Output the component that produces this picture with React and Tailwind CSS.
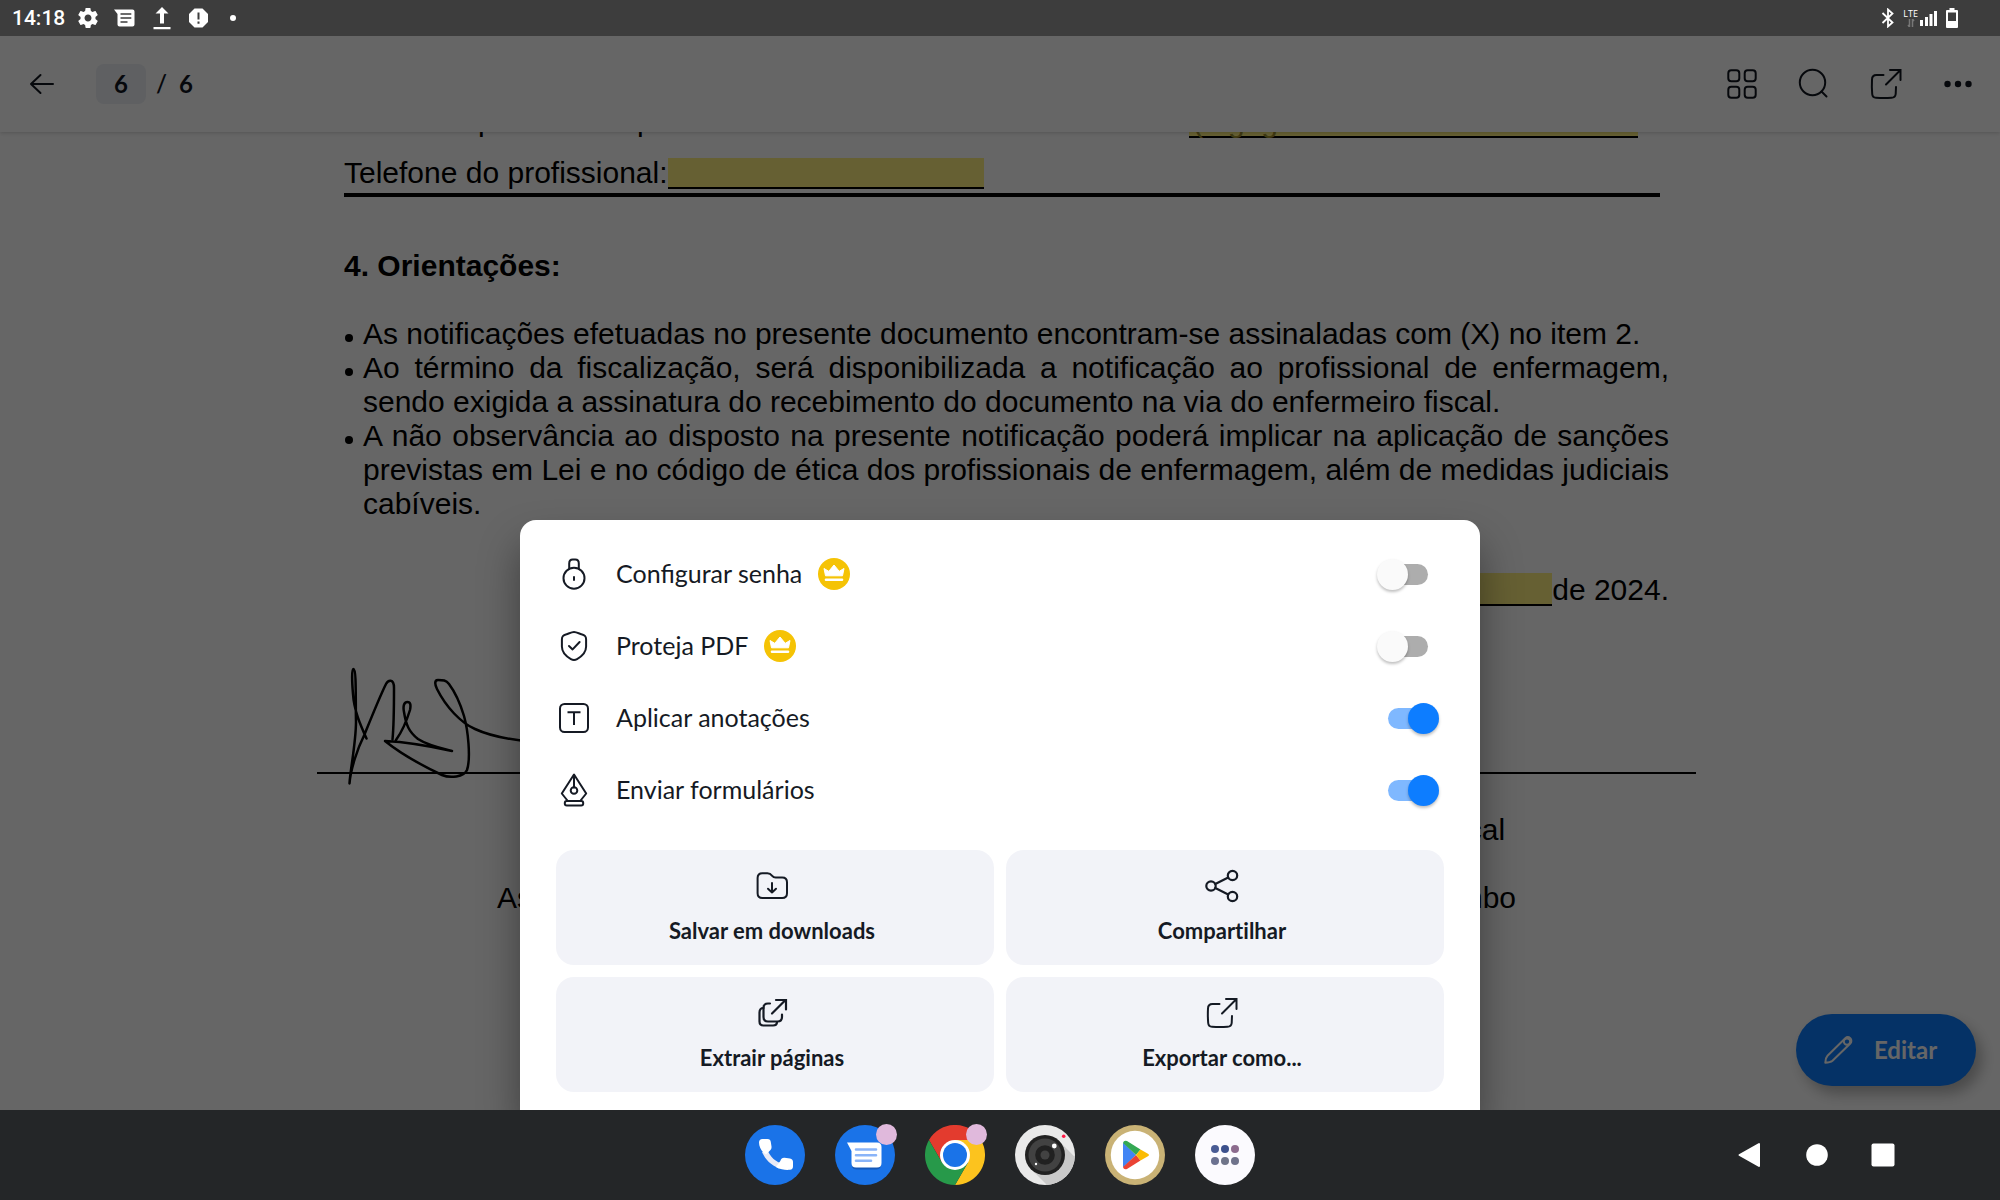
const SANS = "font-['Lato','Open_Sans',sans-serif]";

/* ---------- line icons ---------- */

function Line({ box = 36, className = "size-9", width = 2, children }) {
  return (
    <svg
      viewBox={`0 0 ${box} ${box}`}
      className={className}
      fill="none"
      stroke="currentColor"
      strokeWidth={width}
      strokeLinecap="round"
      strokeLinejoin="round"
      aria-hidden="true"
    >
      {children}
    </svg>
  );
}

const BackIcon = () => (
  <Line>
    <path d="M29 18H7M16.500 9 7 18l9.500 9" />
  </Line>
);

const GridIcon = () => (
  <Line>
    <rect x="4.300" y="4.300" width="11" height="11" rx="3" />
    <rect x="20.700" y="4.300" width="11" height="11" rx="3" />
    <rect x="4.300" y="20.700" width="11" height="11" rx="3" />
    <rect x="20.700" y="20.700" width="11" height="11" rx="3" />
  </Line>
);

const SearchIcon = () => (
  <Line>
    <circle cx="16.500" cy="16.500" r="12.700" />
    <path d="m25.500 25.500 5 5" />
  </Line>
);

const ExportIcon = () => (
  <Line>
    <path d="M15.500 9H8.500Q4 9 4 13.500 3.600 21 4.200 28 4.500 31.600 8 31.800 16 32.400 23.500 31.800 27.300 31.600 27.700 28L28 21" />
    <path d="m18 18.500 14-14M22 4h10.500v10" strokeLinejoin="miter" />
  </Line>
);

const MoreIcon = () => (
  <Line>
    <g fill="currentColor" stroke="none">
      <circle cx="7.500" cy="18" r="3.200" />
      <circle cx="18" cy="18" r="3.200" />
      <circle cx="28.500" cy="18" r="3.200" />
    </g>
  </Line>
);

const PencilIcon = () => (
  <Line>
    <path d="M5.300 30.700c0-3.500.3-5 2.200-7L25.300 6.300a3.700 3.700 0 0 1 5 0 3.700 3.700 0 0 1 0 5.200L12.500 28.800c-2 1.700-3.700 1.900-7.200 1.900Z" />
    <circle cx="27" cy="9.600" r="3.200" />
  </Line>
);

const LockIcon = () => (
  <Line>
    <circle cx="18" cy="22.200" r="10.500" />
    <path d="M13.200 12.500V7.500q0-4 3.500-4h2.600q3.500 0 3.500 4v5M18 21v3" />
  </Line>
);

const ShieldIcon = () => (
  <Line>
    <path d="M18 4c-2 0-4 1-7.500 2.300-3.500 1.200-4.600 2-4.600 5.300v7c0 6.500 4.500 10 9 12.500 2.400 1.300 3.800 1.300 6.200 0 4.500-2.500 9-6 9-12.500v-7c0-3.300-1.100-4.100-4.600-5.300C22 5 20 4 18 4Z" />
    <path d="m13 18 3.600 3.400 7-7.400" />
  </Line>
);

const TextBoxIcon = () => (
  <Line>
    <rect x="4" y="4" width="28" height="28" rx="4.500" />
    <path d="M11.500 12.200h13M18 12.200V25" strokeLinecap="butt" />
  </Line>
);

const NibIcon = () => (
  <Line>
    <path d="M18 2.500 5.800 21.500l6 7.500h12.400l6-7.500L18 2.500ZM18 3v12.500" />
    <circle cx="18" cy="18.500" r="3.300" />
    <rect x="8.800" y="29" width="18.400" height="4.600" rx="2" />
  </Line>
);

const FolderDownIcon = () => (
  <Line>
    <path d="M3.600 10q0-4.800 4.800-4.800h5c2.400 0 3.600 1 4.800 2.600 1 1.300 1.600 1.700 3.400 1.700h6.600q4.800 0 4.800 4.800v11q0 4.800-4.800 4.800H8.400q-4.800 0-4.800-4.800V10Z" />
    <path d="M18 15v9.500M14 20.800l4 3.700 4-3.700" />
  </Line>
);

const ShareIcon = () => (
  <Line width={2.200}>
    <circle cx="7" cy="18" r="4.700" />
    <circle cx="28.500" cy="7.500" r="4.700" />
    <circle cx="28.500" cy="28.500" r="4.700" />
    <path d="m11.300 16 12.900-6.500M11.300 20l12.900 6.500" />
  </Line>
);

const ExtractIcon = () => (
  <Line width={2.200}>
    <path d="M16 8.500h-2q-4.500 0-4.500 4.500v9q0 4.500 4.500 4.500h9.500q4.500 0 4.500-4.500v-2.500" />
    <path d="M9.500 13q-4 0-4 4.500v9q0 4 4 4h9.500q4 0 4-3.500" />
    <path d="m18 18.500 13-13M22 5h10v9.500" strokeLinejoin="miter" />
  </Line>
);

const CrownBadge = () => (
  <svg viewBox="0 0 32 32" className="size-8" aria-label="Premium">
    <circle cx="16" cy="16" r="16" fill="#f5c305" />
    <path
      d="M7.500 17.800 6 10.500l4.800 2.800L16 7l5.200 6.300 4.800-2.800-1.500 7.300Z"
      fill="#fff"
      stroke="#fff"
      strokeLinejoin="round"
    />
    <path d="M8 21.700h16" stroke="#fff" strokeWidth="2.600" strokeLinecap="round" />
  </svg>
);

/* ---------- status bar ---------- */

function StatusBar() {
  return (
    <header className="z-20 flex h-9 shrink-0 items-center justify-between bg-[#3d3d3d] pl-3 pr-[42px] text-white">
      <div className="flex items-center">
        <time className="w-16 font-['Roboto',sans-serif] text-[21px] leading-9 font-medium">14:18</time>
        <svg viewBox="0 0 24 24" className="size-6" fill="currentColor" aria-hidden="true">
          <path d="M19.430 12.980c.04-.32.070-.64.070-.98s-.03-.66-.07-.98l2.110-1.650c.19-.15.240-.42.120-.64l-2-3.460c-.12-.22-.39-.3-.61-.22l-2.490 1c-.52-.4-1.080-.73-1.690-.98l-.38-2.650C14.460 2.180 14.250 2 14 2h-4c-.25 0-.46.180-.49.420l-.38 2.650c-.61.250-1.170.590-1.690.98l-2.490-1c-.23-.09-.49 0-.61.220l-2 3.460c-.13.220-.07.490.12.640l2.110 1.650c-.04.320-.07.650-.07.980s.03.660.070.980l-2.110 1.650c-.19.150-.24.420-.12.640l2 3.460c.12.220.39.300.61.220l2.490-1c.52.400 1.080.730 1.690.98l.38 2.650c.03.240.24.420.49.420h4c.25 0 .46-.18.490-.42l.38-2.650c.61-.25 1.170-.59 1.690-.98l2.490 1c.23.090.49 0 .61-.22l2-3.460c.12-.22.070-.49-.12-.64l-2.110-1.650zM12 15.500c-1.930 0-3.500-1.570-3.500-3.500s1.570-3.500 3.500-3.500 3.500 1.570 3.500 3.500-1.570 3.500-3.500 3.500z" />
        </svg>
        <svg viewBox="0 0 24 24" className="ml-3 size-6" aria-hidden="true">
          <path d="M2 3.500h18.500q2 0 2 2v13q0 2-2 2h-13q-2 0-2-2V8Z" fill="currentColor" />
          <path d="M8.500 8h10.800M8.500 12h10.800M8.500 16h7" stroke="#3d3d3d" strokeWidth="1.500" />
        </svg>
        <svg viewBox="0 0 24 24" className="ml-[14px] size-6" fill="currentColor" aria-hidden="true">
          <path d="M12 1 18.500 7.500H14V17.500h-4V7.500H5.500ZM3.500 21h17v2.200h-17Z" />
        </svg>
        <svg viewBox="0 0 24 24" className="ml-3 size-6" aria-hidden="true">
          <path d="M8.500 2.500h8L22 8v8l-5.500 5.500h-8L3 16V8Z" fill="currentColor" />
          <path d="M12.500 6.500v7M12.500 15.500v2.200" stroke="#3d3d3d" strokeWidth="2" />
        </svg>
        <span className="ml-5 size-[6px] rounded-full bg-white" />
      </div>
      <div className="flex items-center">
        <svg viewBox="0 0 14 20" className="h-5 w-[14px]" fill="none" stroke="currentColor" strokeWidth="1.800" aria-hidden="true">
          <path d="m1.500 5 10 9.500L7 18.500v-17l4.500 4-10 9.500" />
        </svg>
        <div className="ml-2 flex h-5 flex-col items-center font-['Open_Sans',sans-serif] text-[9px] leading-[11px]">
          LTE
          <svg viewBox="0 0 8 8" className="h-2 w-2" stroke="#777" strokeWidth="1.500" fill="none" aria-hidden="true">
            <path d="M2.500 8V0M5.500 0v8M1 6l1.500 2M7 2 5.500 0" />
          </svg>
        </div>
        <svg viewBox="0 0 18 16" className="ml-[2px] h-4 w-[18px]" fill="currentColor" aria-hidden="true">
          <path d="M0 10h3v6H0zM5 7h3v9H5zM9.500 4h3v12h-3zM14 1h3v15h-3z" />
        </svg>
        <svg viewBox="0 0 12 20" className="ml-2 h-5 w-3" aria-hidden="true">
          <path d="M3.500 0h5v2H11q1 0 1 1v16q0 1-1 1H1q-1 0-1-1V3q0-1 1-1h2.500Z" fill="currentColor" />
          <path d="M2 4.500h8V13H2z" fill="#3d3d3d" />
        </svg>
      </div>
    </header>
  );
}

/* ---------- viewer toolbar ---------- */

const tools = [
  ["Miniaturas", GridIcon],
  ["Pesquisar", SearchIcon],
  ["Exportar", ExportIcon],
  ["Mais opções", MoreIcon],
];

function Toolbar() {
  return (
    <nav className={`z-10 flex h-24 shrink-0 items-center justify-between bg-white px-6 text-[#11161f] shadow-[0_1px_4px_rgba(0,0,0,0.18)] ${SANS}`}>
      <div className="flex items-center text-2xl font-bold">
        <button type="button" aria-label="Voltar">
          <BackIcon />
        </button>
        <button type="button" aria-label="Ir para a página" className="ml-9 h-10 w-[50px] rounded-lg bg-[#edf0f5]">
          6
        </button>
        <span className="ml-[10px] font-semibold">/</span>
        <span className="ml-3">6</span>
      </div>
      <div className="flex gap-9">
        {tools.map(([label, Icon]) => (
          <button key={label} type="button" aria-label={label}>
            <Icon />
          </button>
        ))}
      </div>
    </nav>
  );
}

/* ---------- PDF page ---------- */

const guidelines = [
  ["As notificações efetuadas no presente documento encontram-se assinaladas com (X) no item 2."],
  [
    "Ao término da fiscalização, será disponibilizada a notificação ao profissional de enfermagem,",
    "sendo exigida a assinatura do recebimento do documento na via do enfermeiro fiscal.",
  ],
  [
    "A não observância ao disposto na presente notificação poderá implicar na aplicação de sanções",
    "previstas em Lei e no código de ética dos profissionais de enfermagem, além de medidas judiciais",
    "cabíveis.",
  ],
];

function DocumentPage() {
  return (
    <div className="pl-[13px] font-['Liberation_Sans',Arial,sans-serif] text-[30px] leading-[34px] text-black">
      <article className="mx-auto w-full max-w-[1325px]">
        <div className="flex h-[6px] items-end overflow-hidden">
          <span className="ml-[134px] w-[159px]">p</span>
          <span className="w-[552px]">p</span>
          <span className="w-[449px] border-b-2 border-black bg-[#fff080] pl-1 leading-[28px] text-[#a09030]">(mg./g.d./.:</span>
        </div>

        <div className="mt-[18px] flex">
          <label htmlFor="telefone">Telefone do profissional:</label>
          <input
            id="telefone"
            className="mt-[2px] h-[31px] w-[316px] border-b-2 border-black bg-[#fff080]"
          />
        </div>
        <hr className="mt-[3px] mr-[9px] border-t-4 border-black" />

        <h2 className="mt-[52px] font-bold">4. Orientações:</h2>

        <ul className="mt-[34px]">
          {guidelines.map((lines) => (
            <li key={lines[0]} className="flex">
              <span className="mt-[17px] mr-[10px] ml-[1px] size-2 shrink-0 rounded-full bg-black" />
              <div className="min-w-0 flex-1">
                {lines.map((line, i) => (
                  <p
                    key={line}
                    className={
                      i < lines.length - 1
                        ? "whitespace-nowrap [text-align-last:justify]"
                        : "whitespace-nowrap"
                    }
                  >
                    {line}
                  </p>
                ))}
              </div>
            </li>
          ))}
        </ul>

        <div className="mt-[52px] flex justify-end">
          <input
            aria-label="Mês"
            className="h-[33px] w-[240px] border-b-2 border-black bg-[#fff080]"
          />
          <span>de 2024.</span>
        </div>

        <div className="relative -mx-[27px] mt-[165px] border-t-2 border-black">
          <svg
            viewBox="0 0 260 130"
            className="absolute -top-[112px] left-[27px] h-[130px] w-[260px]"
            fill="none"
            stroke="#000"
            strokeWidth="2.500"
            strokeLinecap="round"
            strokeLinejoin="round"
            aria-label="Assinatura"
          >
            <path d="M22.500 76.500C16 62 10 48 9 32 8 20 7.500 7 9.500 7c3 0 2 30 2.500 53 0 20-6 50-6.500 61.500 1-14 8-35 15-49C28 54 36 34 42 22c2-4 8-6 8 4 0 18 0 36-1.500 51.500" />
            <path d="M52 78c5-7 10-17 14-30 1-5 .5-8-2.500-8-4 0-4.500 5-3.500 10 2 13 5 20 14 27 9 6 22 9 34 12-18-4-45-9-67-10 16 13 38 25 57 34 8 3.500 22 2 25-5 4-12 1-40-3-54-3-10-9-24-15-32-3-4-6-4-11-4-4 0-3 5-1 9 9 18 24 34 38 40 15 7 36 11 60 13" />
          </svg>
        </div>

        <div className="mt-[39px] flex justify-between pr-[153px] pl-[153px] text-center">
          <div className="flex flex-col gap-[34px]">
            <p>Profissional</p>
            <p>Assinatura e carimbo</p>
          </div>
          <div className="flex flex-col gap-[34px]">
            <p>Enfermeiro(a) fiscal</p>
            <p>Assinatura e carimbo</p>
          </div>
        </div>
      </article>
    </div>
  );
}

/* ---------- bottom sheet ---------- */

const settings = [
  { id: "senha", label: "Configurar senha", Icon: LockIcon, premium: true, on: false },
  { id: "proteja", label: "Proteja PDF", Icon: ShieldIcon, premium: true, on: false },
  { id: "anotacoes", label: "Aplicar anotações", Icon: TextBoxIcon, premium: false, on: true },
  { id: "formularios", label: "Enviar formulários", Icon: NibIcon, premium: false, on: true },
];

const actions = [
  ["Salvar em downloads", FolderDownIcon],
  ["Compartilhar", ShareIcon],
  ["Extrair páginas", ExtractIcon],
  ["Exportar como...", ExportIcon],
];

function Switch({ id, on }) {
  return (
    <input
      id={id}
      type="checkbox"
      role="switch"
      defaultChecked={on}
      className="relative h-[31px] w-[62px] shrink-0 appearance-none before:absolute before:inset-x-[11px] before:top-[5px] before:h-[21px] before:rounded-full before:bg-[#adadad] before:content-[''] after:absolute after:top-0 after:left-0 after:size-[31px] after:rounded-full after:bg-[#fafafa] after:shadow-[0_2px_3px_rgba(0,0,0,0.25)] after:content-[''] checked:before:bg-[#7fb8ff] checked:after:left-[31px] checked:after:bg-[#0d7dff]"
    />
  );
}

function ExportSheet() {
  return (
    <section
      role="dialog"
      aria-label="Opções de exportação"
      className={`absolute inset-x-0 bottom-0 mx-auto w-full max-w-[960px] rounded-t-2xl bg-white px-9 py-[18px] text-[#151a24] shadow-[0_24px_40px_rgba(0,0,0,0.4)] ${SANS}`}
    >
      <ul>
        {settings.map(({ id, label, Icon, premium, on }) => (
          <li key={id} className="flex h-[72px] items-center pr-[5px]">
            <Icon />
            <label htmlFor={id} className="mr-4 ml-6 pb-0.5 text-[25px] leading-8">
              {label}
            </label>
            {premium && <CrownBadge />}
            <span className="flex-1" />
            <Switch id={id} on={on} />
          </li>
        ))}
      </ul>
      <div className="mt-6 grid grid-cols-2 gap-3">
        {actions.map(([label, Icon]) => (
          <button
            key={label}
            type="button"
            className="flex h-[115px] flex-col items-center rounded-[18px] bg-[#f2f3f8] pt-[18px] pr-1.5 text-[22px] font-bold [font-variant-ligatures:none]"
          >
            <Icon />
            <span className="mt-[13px] leading-7">{label}</span>
          </button>
        ))}
      </div>
    </section>
  );
}

/* ---------- dock ---------- */

function AppIcon({ label, badge, children }) {
  return (
    <button type="button" aria-label={label} className="relative size-[60px]">
      <svg viewBox="0 0 60 60" className="size-[60px]" aria-hidden="true">
        {children}
      </svg>
      {badge && <span className="absolute -top-px -right-[2px] size-[21px] rounded-full bg-[#e0b9dc]" />}
    </button>
  );
}

function Dock() {
  return (
    <footer className="z-20 grid h-[90px] shrink-0 grid-cols-[1fr_auto_1fr] items-center bg-[#242628]">
      <span />
      <div className="flex gap-[30px]">
        <AppIcon label="Telefone">
          <circle cx="30" cy="30" r="30" fill="#1a73e8" />
          <path d="M17 27c3.500 8 9 13 17 16.500l4-4.500c-7-2-13-7-15.500-14Z" fill="#e8eaf6" />
          <path d="M14 17.500q0-3.500 3.500-3.500h5q3 0 3.300 3l.7 4.500q.3 2-1 3.500L21 29.500C16.500 26.500 14 22 14 17.500Z" fill="#fff" />
          <path d="M45 44.800c-4 .4-9 0-14-2.800l4.300-6q1.200-3.500 4.200-3.200l5.500.7q3 .5 3 3.500v4.300q0 3.200-3 3.500Z" fill="#fff" />
        </AppIcon>
        <AppIcon label="Mensagens" badge>
          <circle cx="30" cy="30" r="30" fill="#1a73e8" />
          <path d="M17 42q1 2.500 5 2.500h19q4 0 5-3.500v-10H17Z" fill="#1558b8" />
          <path d="M12 17.500h30q4.500 0 4.500 4.500v16q0 4.500-4.500 4.500H21q-4.500 0-4.500-4.500V26Z" fill="#fff" />
          <path d="M21 24.500h20M21 30.200h20M21 35.800h15" stroke="#8ab4f8" strokeWidth="2.600" strokeLinecap="round" />
        </AppIcon>
        <AppIcon label="Chrome" badge>
          <path d="M30 15 17 37.500 4 15a30 30 0 0 1 52 0Z" fill="#e33b2e" />
          <path d="M30 15h26a30 30 0 0 1-26 45l13-22.500Z" fill="#fcc31e" />
          <path d="M4 15a30 30 0 0 0 26 45l13-22.500-26 0Z" fill="#27994a" />
          <circle cx="30" cy="30" r="15" fill="#fff" />
          <circle cx="30" cy="30" r="12" fill="#1a73e8" />
        </AppIcon>
        <AppIcon label="Câmera">
          <circle cx="30" cy="30" r="30" fill="#e9e9e9" />
          <path d="m44 16 15.800 16A30 30 0 0 1 32 60L16 44Z" fill="#c9c9c9" />
          <circle cx="30" cy="30" r="20" fill="#212121" />
          <circle cx="30" cy="30" r="16.500" fill="#424242" />
          <circle cx="30" cy="30" r="9.800" fill="#212121" />
          <circle cx="30" cy="30" r="4.500" fill="#424242" />
          <circle cx="39.300" cy="21" r="2.400" fill="#fff" />
          <circle cx="21" cy="39" r="1.200" fill="#fff" />
          <circle cx="48.700" cy="11.300" r="1.800" fill="#ff1744" />
        </AppIcon>
        <AppIcon label="Play Store">
          <circle cx="30" cy="30" r="30" fill="#c9b275" />
          <circle cx="30" cy="30" r="24.200" fill="#fff" />
          <path d="M18 17.500v25L31 30Z" fill="#4285f4" />
          <path d="M18 18q.8-3.200 4-2l13.500 8.500L31 30Z" fill="#34a853" />
          <path d="M18 42q.8 3.200 4 2l13.500-8.500L31 30Z" fill="#ea4335" />
          <path d="m35.500 24.500 7 4q3 1.500 0 3l-7 4L31 30Z" fill="#fbbc04" />
        </AppIcon>
        <AppIcon label="Todos os apps">
          <circle cx="30" cy="30" r="30" fill="#fbfafe" />
          <circle cx="20" cy="24" r="4" fill="#495b94" />
          <circle cx="30" cy="24" r="4" fill="#3c508c" />
          <circle cx="40" cy="24" r="4" fill="#8c6b8e" />
          <circle cx="20" cy="36" r="4" fill="#6b7190" />
          <circle cx="30" cy="36" r="4" fill="#6f7489" />
          <circle cx="40" cy="36" r="4" fill="#6f728b" />
        </AppIcon>
      </div>
      <div className="flex items-center justify-end gap-9 pr-[102px] text-white">
        <button type="button" aria-label="Voltar">
          <svg viewBox="0 0 30 30" className="size-[30px]" fill="currentColor" stroke="currentColor" strokeWidth="2" strokeLinejoin="round">
            <path d="M23 4v22L3.500 15Z" />
          </svg>
        </button>
        <button type="button" aria-label="Início">
          <svg viewBox="0 0 30 30" className="size-[30px]" fill="currentColor">
            <circle cx="15" cy="15" r="10.800" />
          </svg>
        </button>
        <button type="button" aria-label="Recentes">
          <svg viewBox="0 0 30 30" className="size-[30px]" fill="currentColor">
            <rect x="3.500" y="3.500" width="23" height="23" rx="2" />
          </svg>
        </button>
      </div>
    </footer>
  );
}

export default function App() {
  return (
    <div className="flex h-screen flex-col overflow-hidden bg-white">
      <StatusBar />
      <div className="relative flex min-h-0 flex-1 flex-col">
        <Toolbar />
        <main className="min-h-0 flex-1 overflow-hidden">
          <DocumentPage />
        </main>
        <button
          type="button"
          className={`absolute right-6 bottom-6 flex h-[72px] w-[180px] items-center rounded-full bg-[#0d7dff] pl-6 text-2xl font-bold text-white shadow-[6px_8px_14px_rgba(0,0,0,0.28)] ${SANS}`}
        >
          <PencilIcon />
          <span className="ml-[18px]">Editar</span>
        </button>
        <div className="absolute inset-0 z-10 bg-black/60" />
        <div className="absolute inset-0 z-10 overflow-hidden">
          <ExportSheet />
        </div>
      </div>
      <Dock />
    </div>
  );
}
